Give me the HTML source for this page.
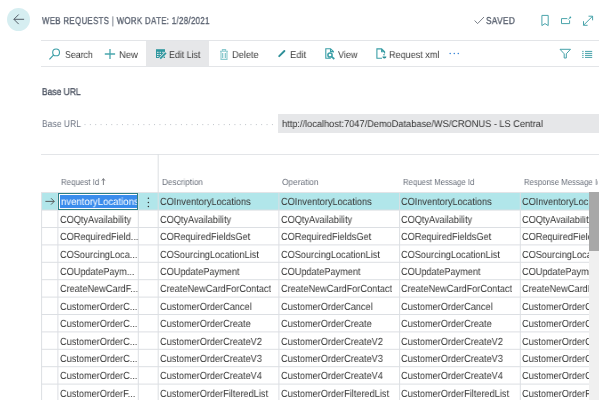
<!DOCTYPE html><html><head><meta charset="utf-8"><style>
*{margin:0;padding:0;box-sizing:border-box}
html,body{width:600px;height:400px;overflow:hidden;background:#fff}
body{font-family:"Liberation Sans",sans-serif;position:relative;color:#333}
.a{position:absolute;white-space:nowrap}
.t{position:absolute;white-space:nowrap;transform-origin:0 0;will-change:transform;text-rendering:geometricPrecision}
svg{position:absolute;overflow:visible}
</style></head><body>
<div class="a" style="left:7.2px;top:8px;width:23px;height:23px;border-radius:50%;background:#d6eef1"></div>
<svg style="left:0;top:0" width="600" height="400"><path d="M13.9 19.3 H24.1 M18.7 14.5 L13.9 19.3 L18.7 24.1" fill="none" stroke="#4d5661" stroke-width="0.95"/></svg>
<svg style="left:0;top:0" width="600" height="400"><path d="M474.6 20.5 L477.6 23.6 L484 17" fill="none" stroke="#6a707a" stroke-width="0.9"/></svg>
<svg style="left:0;top:0" width="600" height="400" fill="none" stroke="#4aa4ab" stroke-width="1.0">
<path d="M541.9 15.4 H548.2 V25.6 L545 23.6 L541.9 25.6 Z"/>
<path d="M567.3 18.6 H561.5 V23.6 H569.6 V20.3"/>
<path d="M568.2 19.7 L570 17.8" stroke-width="0.8"/><circle cx="570.3" cy="17.4" r="0.9" fill="#3a9ea6" stroke="none"/>
<path d="M583.5 25.3 L592.6 16.2 M583.5 21.2 V25.3 H587.6 M588.5 16.2 H592.6 V20.3"/>
</svg>
<div class="a" style="left:41px;top:40px;width:558px;height:1px;background:#e3e5e8"></div>
<div class="a" style="left:41px;top:66px;width:558px;height:1px;background:#e3e5e8"></div>
<div class="a" style="left:146.4px;top:41px;width:62.9px;height:25px;background:#e6e7e9"></div>
<svg style="left:0;top:0" width="600" height="400" fill="none" stroke="#3a9ea6" stroke-width="1.1">
<circle cx="56.1" cy="52.4" r="3.4"/><path d="M53.7 54.9 L49.4 59.3" stroke-width="1.2"/>
<path d="M110 49 V59 M104.8 54 H115.1" stroke="#49a6ad" stroke-width="1.3"/>
</svg>
<svg style="left:0;top:0" width="600" height="400">
<rect x="156" y="49.2" width="9" height="8.8" fill="#2f979f"/>
<g fill="#e6e8ea"><rect x="157" y="51.8" width="1.6" height="1"/><rect x="159.6" y="51.8" width="1.4" height="1"/><rect x="162.2" y="51.8" width="1.6" height="1"/>
<rect x="157" y="54" width="1.6" height="1"/><rect x="159.6" y="54" width="1.4" height="1"/>
<rect x="157" y="56" width="1.6" height="1"/></g>
<path d="M160.2 58.6 L166 52.8" stroke="#e6e7e9" stroke-width="3.2"/>
<path d="M160.2 58.6 L166 52.8" stroke="#2f979f" stroke-width="1.7"/>
</svg>
<svg style="left:0;top:0" width="600" height="400" fill="none" stroke="#8ccacf" stroke-width="1.1">
<path d="M220 51.3 H228 M222.4 51.3 V49.6 H225.6 V51.3 M221 51.5 V59.4 H227 V51.5"/>
<path d="M222.7 53 V58 M225.3 53 V58" stroke="#78c0c5"/>
</svg>
<svg style="left:0;top:0" width="600" height="400" fill="none" stroke="#2e8f98" stroke-linecap="round">
<path d="M279.2 56.2 L284.4 51" stroke-width="1.9"/>
</svg>
<svg style="left:0;top:0" width="600" height="400" fill="none" stroke="#3a9ea6" stroke-width="1.1">
<path d="M333.4 52.6 V51.6 L330.5 48.7 H325.8 V58.3 H330.8 M330.5 48.7 V51.6 H333.4"/>
<circle cx="330" cy="55" r="2.1" stroke-width="1.5"/><path d="M331.6 56.7 L334.3 59" stroke-width="1.7"/>
</svg>
<svg style="left:0;top:0" width="600" height="400" fill="none" stroke="#3a9ea6" stroke-width="1.1">
<path d="M384.6 53.6 V51.8 L381.6 48.9 H376.9 V58.3 H382 M381.6 48.9 V51.8 H384.6"/>
<path d="M383 54.8 H385" stroke-width="0.9"/>
<path d="M382.4 56.6 H386.4 A2 2 0 0 1 382.4 56.6 Z" fill="#2a8f97" stroke="none"/>
</svg>
<svg style="left:0;top:0" width="600" height="400" fill="#3b87d8">
<circle cx="450.2" cy="53.5" r="0.8"/><circle cx="454.3" cy="53.5" r="0.8"/><circle cx="458.3" cy="53.5" r="0.8"/>
</svg>
<svg style="left:0;top:0" width="600" height="400" fill="none" stroke="#45a2a9" stroke-width="1.0">
<path d="M560 49.3 H570.5 L566.3 53.8 V58 H564.2 V53.8 Z"/>
<path d="M585 51.4 H592.2 M585 53.4 H592.2 M585 55.4 H592.2 M585 57.4 H592.2" />
<path d="M582.2 51.4 H583.6 M582.2 53.4 H583.6 M582.2 55.4 H583.6 M582.2 57.4 H583.6" />
</svg>
<svg style="left:0;top:0" width="600" height="400"><path d="M84.55 124.6 H274" stroke="#b0b5bc" stroke-width="0.9" stroke-dasharray="0.9 4.454"/></svg>
<div class="a" style="left:278px;top:114.4px;width:320.6px;height:18.5px;background:#e6e7e9"></div>
<div class="a" style="left:41px;top:154px;width:558px;height:1px;background:#e3e5e8"></div>
<svg style="left:0;top:0" width="600" height="400"><path d="M103.4 185 V179 M101.8 180.7 L103.4 178.5 L105 180.7" fill="none" stroke="#6a6d73" stroke-width="0.85"/></svg>
<div class="a" style="left:41px;top:192px;width:548px;height:1px;background:#e2e4e7"></div>
<div class="a" style="left:41.5px;top:193px;width:547.5px;height:17.1px;background:#b1e6ea"></div>
<svg style="left:0;top:0" width="600" height="400"><path d="M158.2 154 V400 M41.6 193 V400 M57.9 193 V400 M138.3 193 V400 M278.9 193 V400 M399.6 193 V400 M520.3 193 V400 M41.5 210.10 H589 M41.5 227.50 H589 M41.5 244.90 H589 M41.5 262.30 H589 M41.5 279.70 H589 M41.5 297.10 H589 M41.5 314.50 H589 M41.5 331.90 H589 M41.5 349.30 H589 M41.5 366.70 H589 M41.5 384.10 H589 M41.5 401.50 H589" stroke="#dcdfe3" stroke-width="1" fill="none"/></svg>
<div class="t" style="left:41.60px;top:16.70px;font-size:10.0px;line-height:10.0px;color:#5a6270;transform:scaleX(0.7829);-webkit-text-stroke:0.35px #5a6270;letter-spacing:0.45px">WEB REQUESTS | WORK DATE: 1/28/2021</div>
<div class="t" style="left:486.30px;top:16.50px;font-size:10.0px;line-height:10.0px;color:#5a6270;transform:scaleX(0.8243);-webkit-text-stroke:0.35px #5a6270;letter-spacing:0.45px">SAVED</div>
<div class="t" style="left:64.60px;top:50.80px;font-size:10.0px;line-height:10.0px;color:#3b3b3b;transform:scaleX(0.8773)">Search</div>
<div class="t" style="left:118.50px;top:50.80px;font-size:10.0px;line-height:10.0px;color:#3b3b3b;transform:scaleX(0.9443)">New</div>
<div class="t" style="left:169.00px;top:50.80px;font-size:10.0px;line-height:10.0px;color:#3b3b3b;transform:scaleX(0.8826)">Edit List</div>
<div class="t" style="left:231.80px;top:50.80px;font-size:10.0px;line-height:10.0px;color:#3b3b3b;transform:scaleX(0.9271)">Delete</div>
<div class="t" style="left:290.00px;top:50.80px;font-size:10.0px;line-height:10.0px;color:#3b3b3b;transform:scaleX(0.9400)">Edit</div>
<div class="t" style="left:337.50px;top:50.80px;font-size:10.0px;line-height:10.0px;color:#3b3b3b;transform:scaleX(0.9070)">View</div>
<div class="t" style="left:388.70px;top:50.80px;font-size:10.0px;line-height:10.0px;color:#3b3b3b;transform:scaleX(0.9068)">Request xml</div>
<div class="t" style="left:42.00px;top:87.90px;font-size:9.8px;line-height:9.8px;color:#4f5664;transform:scaleX(0.8621);-webkit-text-stroke:0.35px #4f5664">Base URL</div>
<div class="t" style="left:41.60px;top:120.30px;font-size:9.8px;line-height:9.8px;color:#6b7280;transform:scaleX(0.8711)">Base URL</div>
<div class="t" style="left:282.30px;top:120.30px;font-size:9.8px;line-height:9.8px;color:#333;transform:scaleX(0.9417)">http://localhost:7047/DemoDatabase/WS/CRONUS - LS Central</div>
<div class="t" style="left:61.40px;top:178.00px;font-size:8.8px;line-height:8.8px;color:#6b717c;transform:scaleX(0.8978)">Request Id</div>
<div class="t" style="left:161.60px;top:178.00px;font-size:8.8px;line-height:8.8px;color:#6b717c;transform:scaleX(0.9315)">Description</div>
<div class="t" style="left:282.20px;top:178.00px;font-size:8.8px;line-height:8.8px;color:#6b717c;transform:scaleX(0.9472)">Operation</div>
<div class="t" style="left:402.90px;top:178.00px;font-size:8.8px;line-height:8.8px;color:#6b717c;transform:scaleX(0.8849)">Request Message Id</div>
<div class="t" style="left:523.60px;top:178.00px;font-size:8.8px;line-height:8.8px;color:#6b717c;transform:scaleX(0.8849);width:83.96px;overflow:hidden">Response Message Id</div>
<div class="t" style="left:160.00px;top:198.45px;font-size:10.3px;line-height:10.3px;color:#363636;transform:scaleX(0.8900)">COInventoryLocations</div>
<div class="t" style="left:280.70px;top:198.45px;font-size:10.3px;line-height:10.3px;color:#363636;transform:scaleX(0.8900)">COInventoryLocations</div>
<div class="t" style="left:401.40px;top:198.45px;font-size:10.3px;line-height:10.3px;color:#363636;transform:scaleX(0.8900)">COInventoryLocations</div>
<div class="t" style="left:522.10px;top:198.45px;font-size:10.3px;line-height:10.3px;color:#363636;transform:scaleX(0.8900);width:75.17px;overflow:hidden">COInventoryLocations</div>
<div class="t" style="left:59.80px;top:215.85px;font-size:10.3px;line-height:10.3px;color:#363636;transform:scaleX(0.8900)">COQtyAvailability</div>
<div class="t" style="left:160.00px;top:215.85px;font-size:10.3px;line-height:10.3px;color:#363636;transform:scaleX(0.8900)">COQtyAvailability</div>
<div class="t" style="left:280.70px;top:215.85px;font-size:10.3px;line-height:10.3px;color:#363636;transform:scaleX(0.8900)">COQtyAvailability</div>
<div class="t" style="left:401.40px;top:215.85px;font-size:10.3px;line-height:10.3px;color:#363636;transform:scaleX(0.8900)">COQtyAvailability</div>
<div class="t" style="left:522.10px;top:215.85px;font-size:10.3px;line-height:10.3px;color:#363636;transform:scaleX(0.8900);width:75.17px;overflow:hidden">COQtyAvailability</div>
<div class="t" style="left:59.80px;top:233.25px;font-size:10.3px;line-height:10.3px;color:#363636;transform:scaleX(0.8900)">CORequiredField...</div>
<div class="t" style="left:160.00px;top:233.25px;font-size:10.3px;line-height:10.3px;color:#363636;transform:scaleX(0.8900)">CORequiredFieldsGet</div>
<div class="t" style="left:280.70px;top:233.25px;font-size:10.3px;line-height:10.3px;color:#363636;transform:scaleX(0.8900)">CORequiredFieldsGet</div>
<div class="t" style="left:401.40px;top:233.25px;font-size:10.3px;line-height:10.3px;color:#363636;transform:scaleX(0.8900)">CORequiredFieldsGet</div>
<div class="t" style="left:522.10px;top:233.25px;font-size:10.3px;line-height:10.3px;color:#363636;transform:scaleX(0.8900);width:75.17px;overflow:hidden">CORequiredFieldsGet</div>
<div class="t" style="left:59.80px;top:250.65px;font-size:10.3px;line-height:10.3px;color:#363636;transform:scaleX(0.8900)">COSourcingLoca...</div>
<div class="t" style="left:160.00px;top:250.65px;font-size:10.3px;line-height:10.3px;color:#363636;transform:scaleX(0.8900)">COSourcingLocationList</div>
<div class="t" style="left:280.70px;top:250.65px;font-size:10.3px;line-height:10.3px;color:#363636;transform:scaleX(0.8900)">COSourcingLocationList</div>
<div class="t" style="left:401.40px;top:250.65px;font-size:10.3px;line-height:10.3px;color:#363636;transform:scaleX(0.8900)">COSourcingLocationList</div>
<div class="t" style="left:522.10px;top:250.65px;font-size:10.3px;line-height:10.3px;color:#363636;transform:scaleX(0.8900);width:75.17px;overflow:hidden">COSourcingLocationList</div>
<div class="t" style="left:59.80px;top:268.05px;font-size:10.3px;line-height:10.3px;color:#363636;transform:scaleX(0.8900)">COUpdatePaym...</div>
<div class="t" style="left:160.00px;top:268.05px;font-size:10.3px;line-height:10.3px;color:#363636;transform:scaleX(0.8900)">COUpdatePayment</div>
<div class="t" style="left:280.70px;top:268.05px;font-size:10.3px;line-height:10.3px;color:#363636;transform:scaleX(0.8900)">COUpdatePayment</div>
<div class="t" style="left:401.40px;top:268.05px;font-size:10.3px;line-height:10.3px;color:#363636;transform:scaleX(0.8900)">COUpdatePayment</div>
<div class="t" style="left:522.10px;top:268.05px;font-size:10.3px;line-height:10.3px;color:#363636;transform:scaleX(0.8900);width:75.17px;overflow:hidden">COUpdatePayment</div>
<div class="t" style="left:59.80px;top:285.45px;font-size:10.3px;line-height:10.3px;color:#363636;transform:scaleX(0.8900)">CreateNewCardF...</div>
<div class="t" style="left:160.00px;top:285.45px;font-size:10.3px;line-height:10.3px;color:#363636;transform:scaleX(0.8900)">CreateNewCardForContact</div>
<div class="t" style="left:280.70px;top:285.45px;font-size:10.3px;line-height:10.3px;color:#363636;transform:scaleX(0.8900)">CreateNewCardForContact</div>
<div class="t" style="left:401.40px;top:285.45px;font-size:10.3px;line-height:10.3px;color:#363636;transform:scaleX(0.8900)">CreateNewCardForContact</div>
<div class="t" style="left:522.10px;top:285.45px;font-size:10.3px;line-height:10.3px;color:#363636;transform:scaleX(0.8900);width:75.17px;overflow:hidden">CreateNewCardForContact</div>
<div class="t" style="left:59.80px;top:302.85px;font-size:10.3px;line-height:10.3px;color:#363636;transform:scaleX(0.8900)">CustomerOrderC...</div>
<div class="t" style="left:160.00px;top:302.85px;font-size:10.3px;line-height:10.3px;color:#363636;transform:scaleX(0.8900)">CustomerOrderCancel</div>
<div class="t" style="left:280.70px;top:302.85px;font-size:10.3px;line-height:10.3px;color:#363636;transform:scaleX(0.8900)">CustomerOrderCancel</div>
<div class="t" style="left:401.40px;top:302.85px;font-size:10.3px;line-height:10.3px;color:#363636;transform:scaleX(0.8900)">CustomerOrderCancel</div>
<div class="t" style="left:522.10px;top:302.85px;font-size:10.3px;line-height:10.3px;color:#363636;transform:scaleX(0.8900);width:75.17px;overflow:hidden">CustomerOrderCancel</div>
<div class="t" style="left:59.80px;top:320.25px;font-size:10.3px;line-height:10.3px;color:#363636;transform:scaleX(0.8900)">CustomerOrderC...</div>
<div class="t" style="left:160.00px;top:320.25px;font-size:10.3px;line-height:10.3px;color:#363636;transform:scaleX(0.8900)">CustomerOrderCreate</div>
<div class="t" style="left:280.70px;top:320.25px;font-size:10.3px;line-height:10.3px;color:#363636;transform:scaleX(0.8900)">CustomerOrderCreate</div>
<div class="t" style="left:401.40px;top:320.25px;font-size:10.3px;line-height:10.3px;color:#363636;transform:scaleX(0.8900)">CustomerOrderCreate</div>
<div class="t" style="left:522.10px;top:320.25px;font-size:10.3px;line-height:10.3px;color:#363636;transform:scaleX(0.8900);width:75.17px;overflow:hidden">CustomerOrderCreate</div>
<div class="t" style="left:59.80px;top:337.65px;font-size:10.3px;line-height:10.3px;color:#363636;transform:scaleX(0.8900)">CustomerOrderC...</div>
<div class="t" style="left:160.00px;top:337.65px;font-size:10.3px;line-height:10.3px;color:#363636;transform:scaleX(0.8900)">CustomerOrderCreateV2</div>
<div class="t" style="left:280.70px;top:337.65px;font-size:10.3px;line-height:10.3px;color:#363636;transform:scaleX(0.8900)">CustomerOrderCreateV2</div>
<div class="t" style="left:401.40px;top:337.65px;font-size:10.3px;line-height:10.3px;color:#363636;transform:scaleX(0.8900)">CustomerOrderCreateV2</div>
<div class="t" style="left:522.10px;top:337.65px;font-size:10.3px;line-height:10.3px;color:#363636;transform:scaleX(0.8900);width:75.17px;overflow:hidden">CustomerOrderCreateV2</div>
<div class="t" style="left:59.80px;top:355.05px;font-size:10.3px;line-height:10.3px;color:#363636;transform:scaleX(0.8900)">CustomerOrderC...</div>
<div class="t" style="left:160.00px;top:355.05px;font-size:10.3px;line-height:10.3px;color:#363636;transform:scaleX(0.8900)">CustomerOrderCreateV3</div>
<div class="t" style="left:280.70px;top:355.05px;font-size:10.3px;line-height:10.3px;color:#363636;transform:scaleX(0.8900)">CustomerOrderCreateV3</div>
<div class="t" style="left:401.40px;top:355.05px;font-size:10.3px;line-height:10.3px;color:#363636;transform:scaleX(0.8900)">CustomerOrderCreateV3</div>
<div class="t" style="left:522.10px;top:355.05px;font-size:10.3px;line-height:10.3px;color:#363636;transform:scaleX(0.8900);width:75.17px;overflow:hidden">CustomerOrderCreateV3</div>
<div class="t" style="left:59.80px;top:372.45px;font-size:10.3px;line-height:10.3px;color:#363636;transform:scaleX(0.8900)">CustomerOrderC...</div>
<div class="t" style="left:160.00px;top:372.45px;font-size:10.3px;line-height:10.3px;color:#363636;transform:scaleX(0.8900)">CustomerOrderCreateV4</div>
<div class="t" style="left:280.70px;top:372.45px;font-size:10.3px;line-height:10.3px;color:#363636;transform:scaleX(0.8900)">CustomerOrderCreateV4</div>
<div class="t" style="left:401.40px;top:372.45px;font-size:10.3px;line-height:10.3px;color:#363636;transform:scaleX(0.8900)">CustomerOrderCreateV4</div>
<div class="t" style="left:522.10px;top:372.45px;font-size:10.3px;line-height:10.3px;color:#363636;transform:scaleX(0.8900);width:75.17px;overflow:hidden">CustomerOrderCreateV4</div>
<div class="t" style="left:59.80px;top:389.85px;font-size:10.3px;line-height:10.3px;color:#363636;transform:scaleX(0.8900)">CustomerOrderF...</div>
<div class="t" style="left:160.00px;top:389.85px;font-size:10.3px;line-height:10.3px;color:#363636;transform:scaleX(0.8900)">CustomerOrderFilteredList</div>
<div class="t" style="left:280.70px;top:389.85px;font-size:10.3px;line-height:10.3px;color:#363636;transform:scaleX(0.8900)">CustomerOrderFilteredList</div>
<div class="t" style="left:401.40px;top:389.85px;font-size:10.3px;line-height:10.3px;color:#363636;transform:scaleX(0.8900)">CustomerOrderFilteredList</div>
<div class="t" style="left:522.10px;top:389.85px;font-size:10.3px;line-height:10.3px;color:#363636;transform:scaleX(0.8900);width:75.17px;overflow:hidden">CustomerOrderFilteredList</div>
<div class="a" style="left:57.6px;top:192.6px;width:80.6px;height:17.2px;border:1px solid #2a7f86;background:#fff"></div>
<div class="a" style="left:60px;top:195px;width:76.5px;height:12.8px;background:#3a8cec;overflow:hidden"><div class="t" style="left:0.90px;top:3.20px;font-size:10.3px;line-height:10.3px;color:#fff;transform:scaleX(0.9300)">nventoryLocations</div></div>
<svg style="left:0;top:0" width="600" height="400"><path d="M45.4 201.4 H54.2 M51 198.2 L54.2 201.4 L51 204.6" fill="none" stroke="#505050" stroke-width="0.9"/></svg>
<svg style="left:0;top:0" width="600" height="400" fill="#333"><circle cx="148.4" cy="198.3" r="0.75"/><circle cx="148.4" cy="202.4" r="0.75"/><circle cx="148.4" cy="206.4" r="0.75"/></svg>
<div class="a" style="left:589.4px;top:192.5px;width:9.8px;height:207.5px;background:#f0f0f0"></div>
<div class="a" style="left:589.4px;top:192.3px;width:9.8px;height:58.8px;background:#a8a8a8"></div>
</body></html>
